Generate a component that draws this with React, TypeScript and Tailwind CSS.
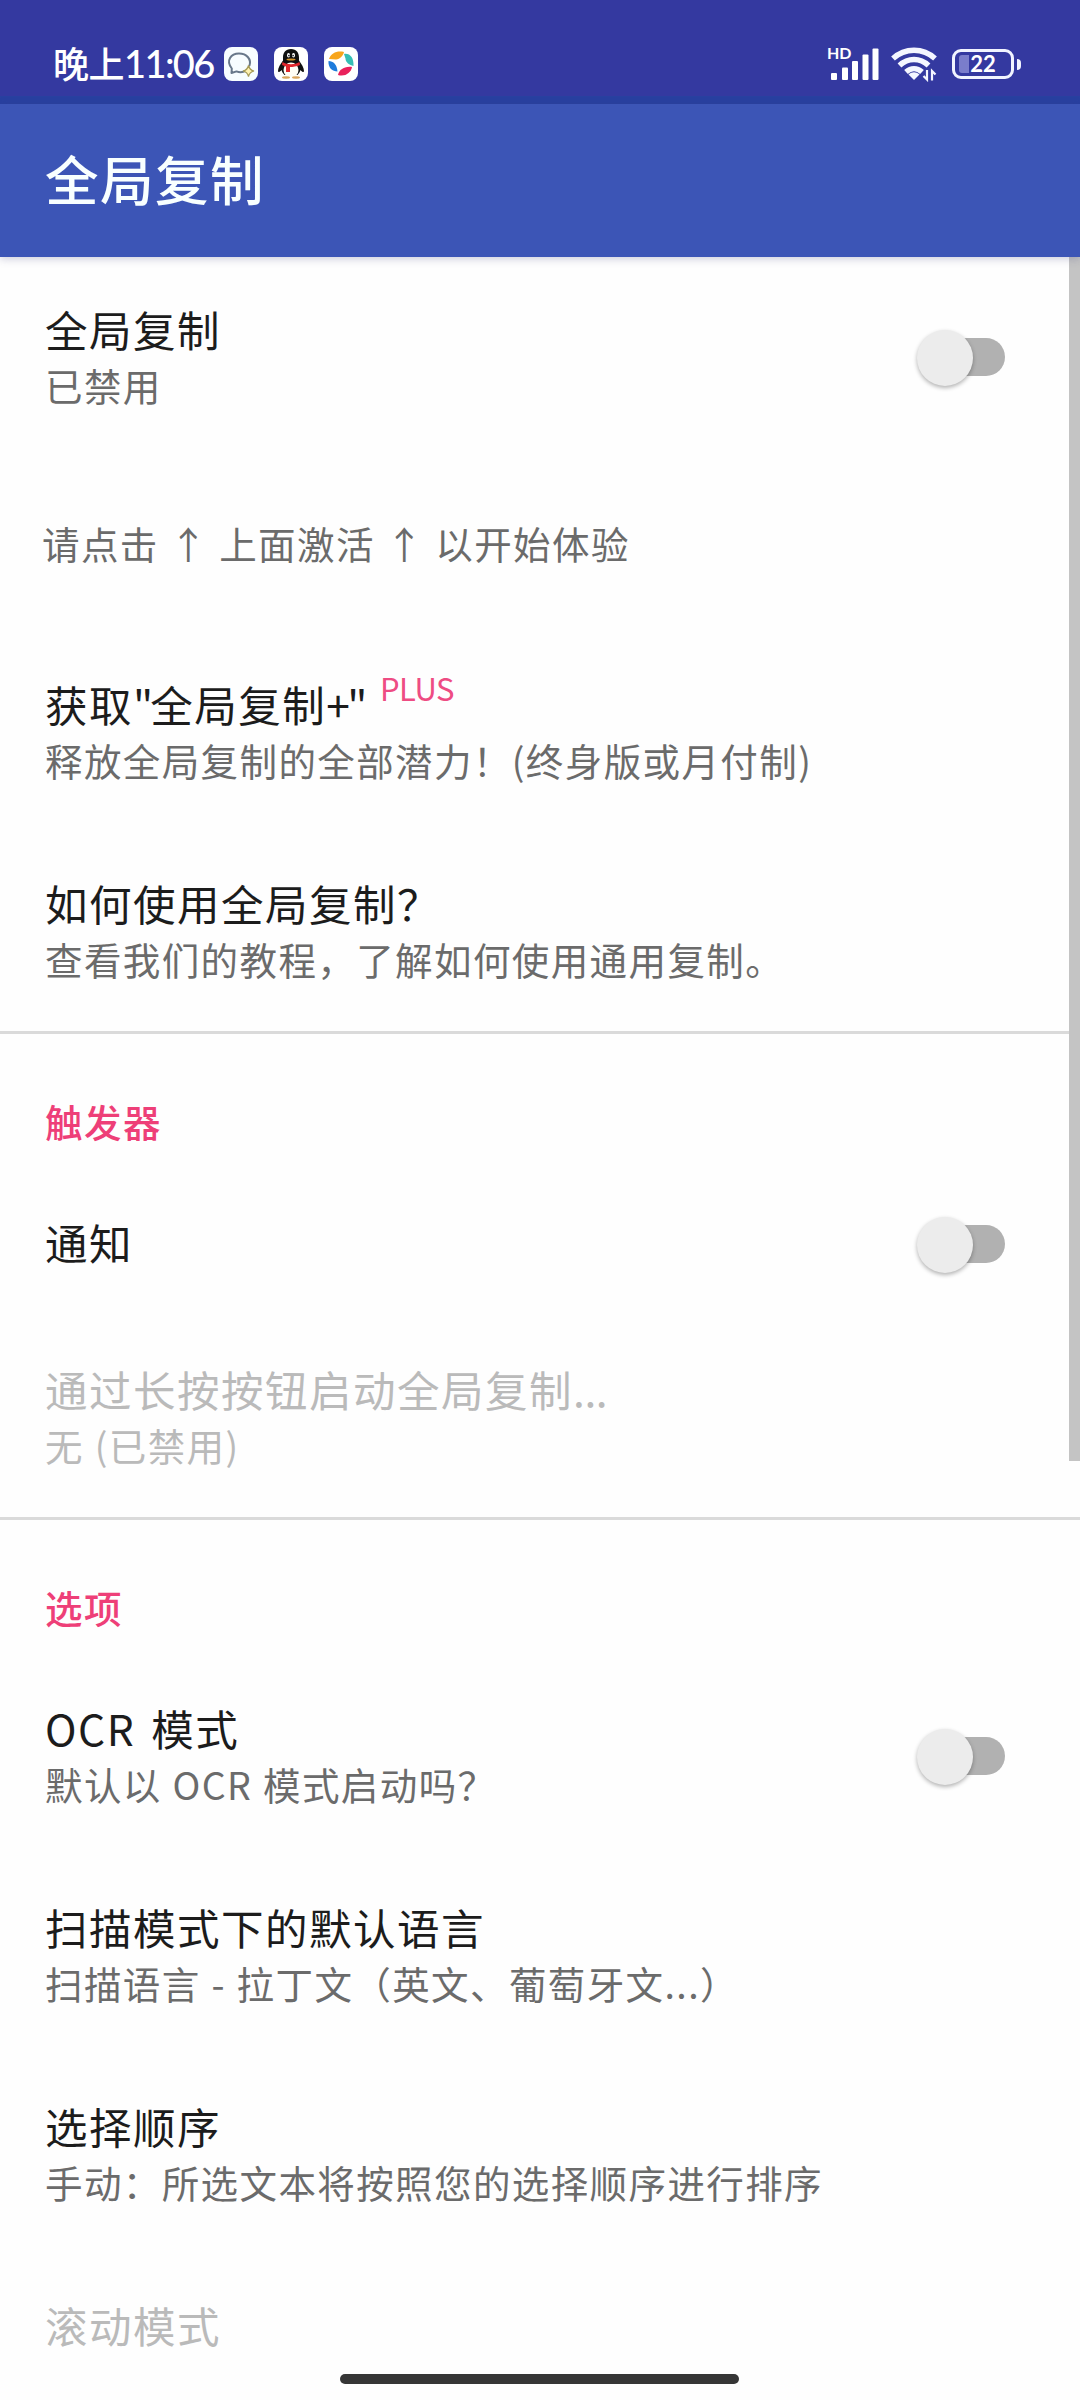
import React from 'react';

interface ToggleProps {
  label: string;
}

const Toggle: React.FC<ToggleProps> = ({ label }) => (
  <button type="button" role="switch" aria-checked={false} aria-label={label} className="relative mr-[75px] flex h-[38px] w-[83px] shrink-0 items-center rounded-full bg-[#b1b1b1]">
    <span className="absolute -left-[5px] -top-[8px] size-[56px] rounded-full bg-[#ececec] shadow-[0_2px_4px_rgba(0,0,0,0.3)]" />
  </button>
);

interface PreferenceProps {
  title: React.ReactNode;
  summary?: string;
  disabled?: boolean;
  toggleLabel?: string;
}

const Preference: React.FC<PreferenceProps> = ({ title, summary, disabled = false, toggleLabel }) => (
  <div className={`flex shrink-0 items-center justify-between pl-[45px] ${summary ? 'h-[199px]' : 'h-[147px]'}`}>
    <div className="whitespace-nowrap pb-[4px]">
      <div className={`h-[60px] text-[42.5px] leading-[60px] tracking-[1.5px] [word-spacing:5px] ${disabled ? 'text-[#bababa]' : 'text-[#1c1c1c]'}`}>{title}</div>
      {summary && (
        <div className={`h-[52px] text-[37.5px] leading-[52px] tracking-[1.4px] [word-spacing:1px] ${disabled ? 'text-[#bababa]' : 'text-[#6b6b6b]'}`}>{summary}</div>
      )}
    </div>
    {toggleLabel && <Toggle label={toggleLabel} />}
  </div>
);

const Category: React.FC<{ children: string }> = ({ children }) => (
  <h2 className="h-[136px] shrink-0 pl-[45px] pt-[61px] text-[37.5px] font-medium leading-[52px] tracking-[1.5px] text-[#ee3f78]">{children}</h2>
);

const Divider = () => <div className="mt-px h-[3px] shrink-0 bg-[#dadada]" />;

const ChatIcon = () => (
  <svg viewBox="0 0 34 34" className="size-[34px]">
    <rect width="34" height="34" rx="8" fill="#f7fdff" />
    <path d="M20 24.500c-2 .8-5 .9-7.500-.1L7.500 26l.3-4.500C1.500 13.500 7 6.500 15 6.500c8 0 12.500 6 10.500 12" fill="none" stroke="#68788a" strokeWidth="2" strokeLinecap="round" strokeLinejoin="round" />
    <path d="M24.500 18.500c.8 3.500 2 4.700 5.500 5.500-3.500.8-4.700 2-5.500 5.500-.8-3.500-2-4.700-5.500-5.500 3.500-.8 4.700-2 5.500-5.500z" fill="#fff3b0" stroke="#a59a55" strokeWidth="1.200" />
  </svg>
);

const PenguinIcon = () => (
  <svg viewBox="0 0 34 34" className="size-[34px]">
    <rect width="34" height="34" rx="8" fill="#fff" />
    <path d="M17 2c-5.500 0-8 4-8 8.500v3C6.500 17 4 20.500 4 24c0 1.500 1.500 1.500 3.500-1 .7 2 1.500 3.500 3 5h13c1.500-1.500 2.300-3 3-5 2 2.500 3.500 2.500 3.500 1 0-3.500-2.500-7-5-10.500v-3C25 6 22.500 2 17 2z" fill="#101010" />
    <ellipse cx="17" cy="23" rx="7.500" ry="7.500" fill="#fffdf5" />
    <ellipse cx="14.500" cy="8.200" rx="1.500" ry="2.200" fill="#fff" />
    <ellipse cx="19.500" cy="8.200" rx="1.500" ry="2.200" fill="#fff" />
    <circle cx="14.900" cy="8.600" r=".8" />
    <circle cx="19.100" cy="8.600" r=".8" />
    <ellipse cx="17" cy="12.500" rx="4.500" ry="1.100" fill="#d8962a" />
    <path d="M8.500 15c5 3 12 3 17 0l.5 3c-3.500 1.500-7 2-10 2v5h-4v-5.500l-4-1.500z" fill="#e0262c" />
    <ellipse cx="12" cy="30.500" rx="4" ry="1.200" fill="#d9a45c" />
    <ellipse cx="22" cy="30.500" rx="4" ry="1.200" fill="#d9a45c" />
  </svg>
);

const PinwheelIcon = () => (
  <svg viewBox="0 0 34 34" className="size-[34px]">
    <rect width="34" height="34" rx="8" fill="#fff" />
    <path d="M5 12C7 6 13 3.500 20 5c-1 4-4 7-8 7.500z" fill="#f8a51b" />
    <path d="M20 7c6-1 10 4 9.500 12-4-1-8-3.500-8-7.500z" fill="#35bfb5" />
    <path d="M4.500 14c5 0 8.500 4 9 10.500-5 0-9.500-3.500-9-10.500z" fill="#1d7bdc" />
    <path d="M14 28c1-5 6-9 14-8-1 6-7 10-14 8z" fill="#e9215b" />
  </svg>
);

const SignalIcon = () => (
  <svg viewBox="0 0 50 34" className="h-[34px] w-[50px] text-white" fill="currentColor">
    <rect x="2" y="26" width="6" height="7" rx="1" />
    <rect x="13" y="20.500" width="6" height="12.500" rx="1" />
    <rect x="23" y="14" width="6" height="19" rx="1" />
    <rect x="33.500" y="7.500" width="6" height="25.500" rx="1" />
    <rect x="43.500" y="1.500" width="6" height="31.500" rx="1" />
  </svg>
);

const WifiIcon = () => (
  <svg viewBox="0 0 46 36" className="h-[36px] w-[46px]" fill="none" stroke="#f4f6ff">
    <path d="M2 12.500C14 1.500 32 1.500 44 12.500M8.500 19.500c8.500-8 20.500-8 29 0M15 26c5-4.500 11-4.500 16 0" strokeWidth="5.500" />
    <path d="M17.500 28.500c3.500-3 7.500-3 11 0L23 34z" fill="#f4f6ff" stroke="none" />
    <path d="M36 24v9.500l-3.500-3.500M41 34.500V25l3.500 3.500" strokeWidth="2.200" />
  </svg>
);

const StatusBar = () => (
  <div className="flex h-[104px] shrink-0 items-start justify-between border-b-8 border-[#2840a0] bg-[#3439a0] pl-[53px] pr-[59px] pt-[43px] text-white">
    <div className="flex h-[42px] items-center">
      <span className="flex w-[171px] items-baseline whitespace-nowrap pb-[3px] text-[36px] font-medium leading-[42px] tracking-[-0.5px]">
        晚上
        <span className="font-['Lato',sans-serif] text-[38px] tracking-[-1.6px]">11:06</span>
      </span>
      <div className="flex gap-4">
        <ChatIcon />
        <PenguinIcon />
        <PinwheelIcon />
      </div>
    </div>
    <div className="flex h-[42px] items-center">
      <div className="relative mr-[12px]">
        <SignalIcon />
        <span className="absolute -left-0.5 -top-[2px] font-['Lato',sans-serif] text-[16px] font-bold leading-[16px]">HD</span>
      </div>
      <WifiIcon />
      <div className="ml-[15px] flex items-center gap-[3px]">
        <div className="relative flex h-[30px] w-[62px] items-center justify-center overflow-hidden rounded-[9px] border-[3px] border-[#f1f4ff]">
          <span className="absolute inset-y-[3px] left-[4px] w-[10px] rounded-l-[3px] bg-[#7a7dcb]" />
          <span className="relative font-['Lato',sans-serif] text-[22px] font-bold leading-none">22</span>
        </div>
        <span className="h-[11px] w-[4px] rounded-r-sm bg-[#f1f4ff]" />
      </div>
    </div>
  </div>
);

export default function App() {
  return (
    <div className="relative flex h-[2400px] w-[1080px] flex-col overflow-hidden bg-[#fefefe] font-['Noto_Sans_CJK_SC',sans-serif]">
      <StatusBar />
      <header className="z-10 flex h-[153px] shrink-0 items-center bg-[#3c55b6] pb-[6px] pl-[45px] shadow-[0_2px_8px_rgba(60,60,120,0.25)]">
        <h1 className="text-[53.5px] font-medium leading-[80px] tracking-[1.5px] text-[#f8ffff]">全局复制</h1>
      </header>

      <main className="flex grow flex-col overflow-hidden">
        <Preference title="全局复制" summary="已禁用" toggleLabel="全局复制" />
        <p className="flex h-[176px] shrink-0 items-center whitespace-pre pb-[3px] pl-[42px] text-[37.5px] leading-[52px] tracking-[1.4px] [word-spacing:1px] text-[#6b6b6b]">请点击 ↑ 上面激活 ↑ 以开始体验</p>
        <Preference
          title={
            <span className="flex">
              获取<span className="tracking-[-3px]">"</span>全局复制<span className="tracking-[-2.5px]">+"</span>
              <span className="-mt-4 ml-[15px] text-[31px] tracking-[-0.5px] text-[#ee4c83]">PLUS</span>
            </span>
          }
          summary="释放全局复制的全部潜力！(终身版或月付制)"
        />
        <Preference title="如何使用全局复制？" summary="查看我们的教程，了解如何使用通用复制。" />
        <Divider />

        <Category>触发器</Category>
        <Preference title="通知" toggleLabel="通知" />
        <Preference title={<>通过长按按钮启动全局复制<span className="tracking-[-0.4px]">...</span></>} summary="无 (已禁用)" disabled />
        <Divider />

        <Category>选项</Category>
        <Preference title="OCR 模式" summary="默认以 OCR 模式启动吗？" toggleLabel="OCR 模式" />
        <Preference title="扫描模式下的默认语言" summary="扫描语言 - 拉丁文（英文、葡萄牙文...）" />
        <Preference title="选择顺序" summary="手动：所选文本将按照您的选择顺序进行排序" />
        <Preference title="滚动模式" disabled />
      </main>

      {/* scroll thumb and gesture bar float over the list */}
      <div className="absolute right-0 top-[257px] h-[1204px] w-[11px] bg-[#c4c4c4]" />
      <div className="absolute bottom-[16px] left-[340px] h-[10px] w-[399px] rounded-full bg-[#363636]" />
    </div>
  );
}
